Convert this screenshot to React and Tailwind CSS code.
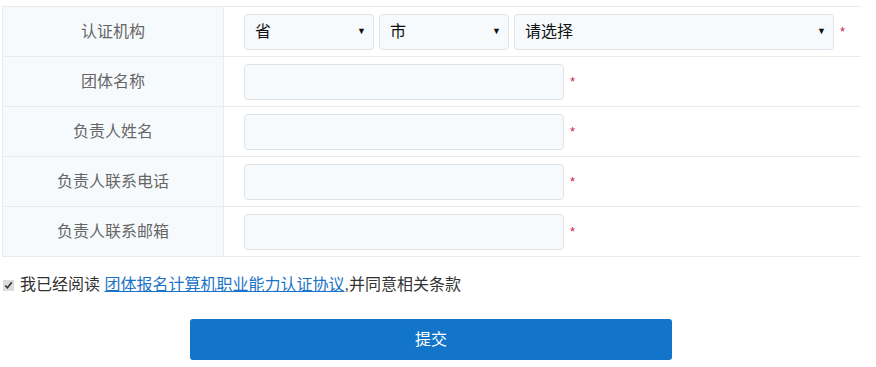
import React from 'react';

const font = { fontFamily: '"Liberation Sans", "Noto Sans CJK SC", sans-serif' };

const Star = () => <span className="ml-[6px] text-[13px] leading-none text-[#d0204a]">*</span>;

const FakeSelect = ({ label, width }) => (
  <div
    className={`flex h-[36px] items-center justify-between rounded-[4px] border border-[#dfe3e8] bg-[#f7fafc] pl-[10px] pr-[7px] text-[16px] text-[#111] ${width}`}
  >
    <span>{label}</span>
    <span className="text-[9px] text-[#111]">▼</span>
  </div>
);

const Row = ({ label, children }) => (
  <div className="flex h-[50px] border-b border-[#e8ecef]">
    <div className="flex w-[221px] items-center justify-center border-r border-[#e8ecef] bg-[#f7fafc] text-[16px] text-[#666]">
      {label}
    </div>
    <div className="flex flex-1 items-center pl-[20px]">{children}</div>
  </div>
);

const TextInput = () => (
  <>
    <input
      type="text"
      className="h-[36px] w-[320px] rounded-[4px] border border-[#dfe3e8] bg-[#f7fafc] px-[10px] outline-none"
    />
    <Star />
  </>
);

export default function App() {
  return (
    <div className="w-[876px] h-[367px] bg-white" style={font}>
      <div className="ml-[2px] mt-[6px] w-[859px] border-t border-l border-[#e8ecef]">
        <Row label="认证机构">
          <div className="flex items-center gap-[5px]">
            <FakeSelect label="省" width="w-[130px]" />
            <FakeSelect label="市" width="w-[130px]" />
            <FakeSelect label="请选择" width="w-[320px]" />
          </div>
          <Star />
        </Row>
        <Row label="团体名称">
          <TextInput />
        </Row>
        <Row label="负责人姓名">
          <TextInput />
        </Row>
        <Row label="负责人联系电话">
          <TextInput />
        </Row>
        <Row label="负责人联系邮箱">
          <TextInput />
        </Row>
      </div>

      <div className="mt-[16px] flex h-[24px] items-center pl-[3px] text-[16px] text-[#333]">
        <input type="checkbox" defaultChecked className="m-0 h-[11px] w-[11px] accent-[#dcdcdc]" />
        <span className="ml-[6px]">
          我已经阅读{' '}
          <a href="#" className="text-[#1a73c8] underline">
            团体报名计算机职业能力认证协议
          </a>
          ,并同意相关条款
        </span>
      </div>

      <div className="mt-[22px] pl-[190px]">
        <button className="h-[41px] w-[482px] rounded-[3px] bg-[#1275c9] text-[16px] text-white">
          提交
        </button>
      </div>
    </div>
  );
}
